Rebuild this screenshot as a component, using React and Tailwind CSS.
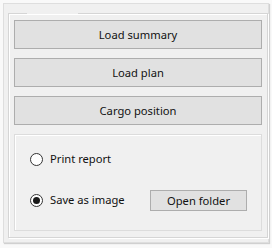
export default function App() {
  const font = { fontFamily: '"Noto Sans", "Open Sans", sans-serif' };
  return (
    <div className="w-[272px] h-[248px] bg-[#f9f9f9] p-[3px] text-[11.2px] text-[#111111]" style={font}>
      <div className="h-[240px] border border-[#dedede] bg-[#f0f0f0] p-[2px] shadow-[1px_1px_1px_#d0d0d0]">
        <fieldset className="mt-[7px] ml-[2px] w-[258px] h-[225px] border border-[#d5d5d5] shadow-[1px_1px_0_#ffffff,inset_1px_1px_0_#ffffff] px-[5px]">
          <legend className="ml-[13px] w-[51px] h-0 p-0"></legend>
          <div className="flex flex-col gap-[9px] pt-[6px]">
            {["Load summary", "Load plan", "Cargo position"].map((t) => (
              <button
                key={t}
                className="h-[29px] w-[248px] border border-[#adadad] bg-[#e1e1e1] flex items-center justify-center leading-none"
              >
                {t}
              </button>
            ))}
            <div className="w-[248px] h-[97px] border border-[#dcdcdc] shadow-[inset_1px_1px_0_#ffffff] pl-[15px] pt-[14px] flex flex-col gap-[20px]">
              <label className="flex items-center h-[21px] gap-[7px]">
                <span className="w-[13px] h-[13px] rounded-full border border-[#333333] bg-white"></span>
                <span>Print report</span>
              </label>
              <div className="flex items-center h-[21px]">
                <label className="flex items-center gap-[7px] w-[120px]">
                  <span className="w-[13px] h-[13px] rounded-full border border-[#333333] bg-white flex items-center justify-center">
                    <span className="w-[7px] h-[7px] rounded-full bg-[#1a1a1a]"></span>
                  </span>
                  <span>Save as image</span>
                </label>
                <button className="w-[97px] h-[21px] border border-[#adadad] bg-[#e1e1e1] flex items-center justify-center leading-none">
                  Open folder
                </button>
              </div>
            </div>
          </div>
        </fieldset>
      </div>
    </div>
  );
}
